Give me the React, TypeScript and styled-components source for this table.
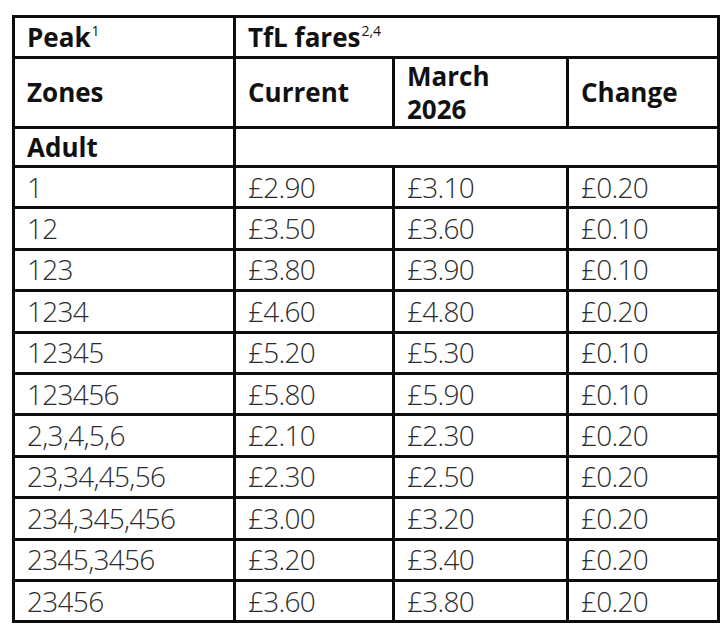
import React from "react";
import styled, { createGlobalStyle } from "styled-components";

const GlobalStyle = createGlobalStyle`
  body {
    margin: 0;
    background: #ffffff;
    font-family: "Open Sans", "Noto Sans", sans-serif;
  }
`;

const Page = styled.div`
  padding: 15px 3px 0 12px;
`;

const FareTable = styled.table`
  width: 705px;
  border-collapse: collapse;
  table-layout: fixed;
  border: 3px solid #0d0d0d;
`;

const Cell = styled.td<{ $bold?: boolean }>`
  border: 3px solid #0d0d0d;
  padding: 0 0 0 12px;
  vertical-align: middle;
  font-size: ${(p) => (p.$bold ? "26px" : "28px")};
  font-weight: ${(p) => (p.$bold ? 700 : 300)};
  color: ${(p) => (p.$bold ? "#111" : "#2b2b2b")};
  letter-spacing: ${(p) => (p.$bold ? "0" : "-0.7px")};
  line-height: 33px;
  white-space: nowrap;
`;

const Row = styled.tr<{ $h: number }>`
  height: ${(p) => p.$h}px;
`;

const Sup = styled.sup`
  font-size: 14px;
  font-weight: 400;
  vertical-align: 11px;
  line-height: 0;
  letter-spacing: 0;
  margin-left: 1px;
`;

const fares = [
  ["1", "£2.90", "£3.10", "£0.20"],
  ["12", "£3.50", "£3.60", "£0.10"],
  ["123", "£3.80", "£3.90", "£0.10"],
  ["1234", "£4.60", "£4.80", "£0.20"],
  ["12345", "£5.20", "£5.30", "£0.10"],
  ["123456", "£5.80", "£5.90", "£0.10"],
  ["2,3,4,5,6", "£2.10", "£2.30", "£0.20"],
  ["23,34,45,56", "£2.30", "£2.50", "£0.20"],
  ["234,345,456", "£3.00", "£3.20", "£0.20"],
  ["2345,3456", "£3.20", "£3.40", "£0.20"],
  ["23456", "£3.60", "£3.80", "£0.20"],
];

const App = () => {
  return (
    <>
      <GlobalStyle />
      <Page>
        <FareTable>
          <colgroup>
            <col style={{ width: 221 }} />
            <col style={{ width: 159 }} />
            <col style={{ width: 174 }} />
            <col style={{ width: 151 }} />
          </colgroup>
          <tbody>
            <Row $h={41}>
              <Cell $bold>
                Peak<Sup>1</Sup>
              </Cell>
              <Cell $bold colSpan={3}>
                TfL fares<Sup>2,4</Sup>
              </Cell>
            </Row>
            <Row $h={70}>
              <Cell $bold>Zones</Cell>
              <Cell $bold>Current</Cell>
              <Cell $bold>
                March
                <br />
                2026
              </Cell>
              <Cell $bold>Change</Cell>
            </Row>
            <Row $h={39}>
              <Cell $bold>Adult</Cell>
              <Cell colSpan={3} />
            </Row>
            {fares.map((r) => (
              <Row $h={41.4} key={r[0]}>
                {r.map((v, i) => (
                  <Cell key={i}>{v}</Cell>
                ))}
              </Row>
            ))}
          </tbody>
        </FareTable>
      </Page>
    </>
  );
};

export default App;
